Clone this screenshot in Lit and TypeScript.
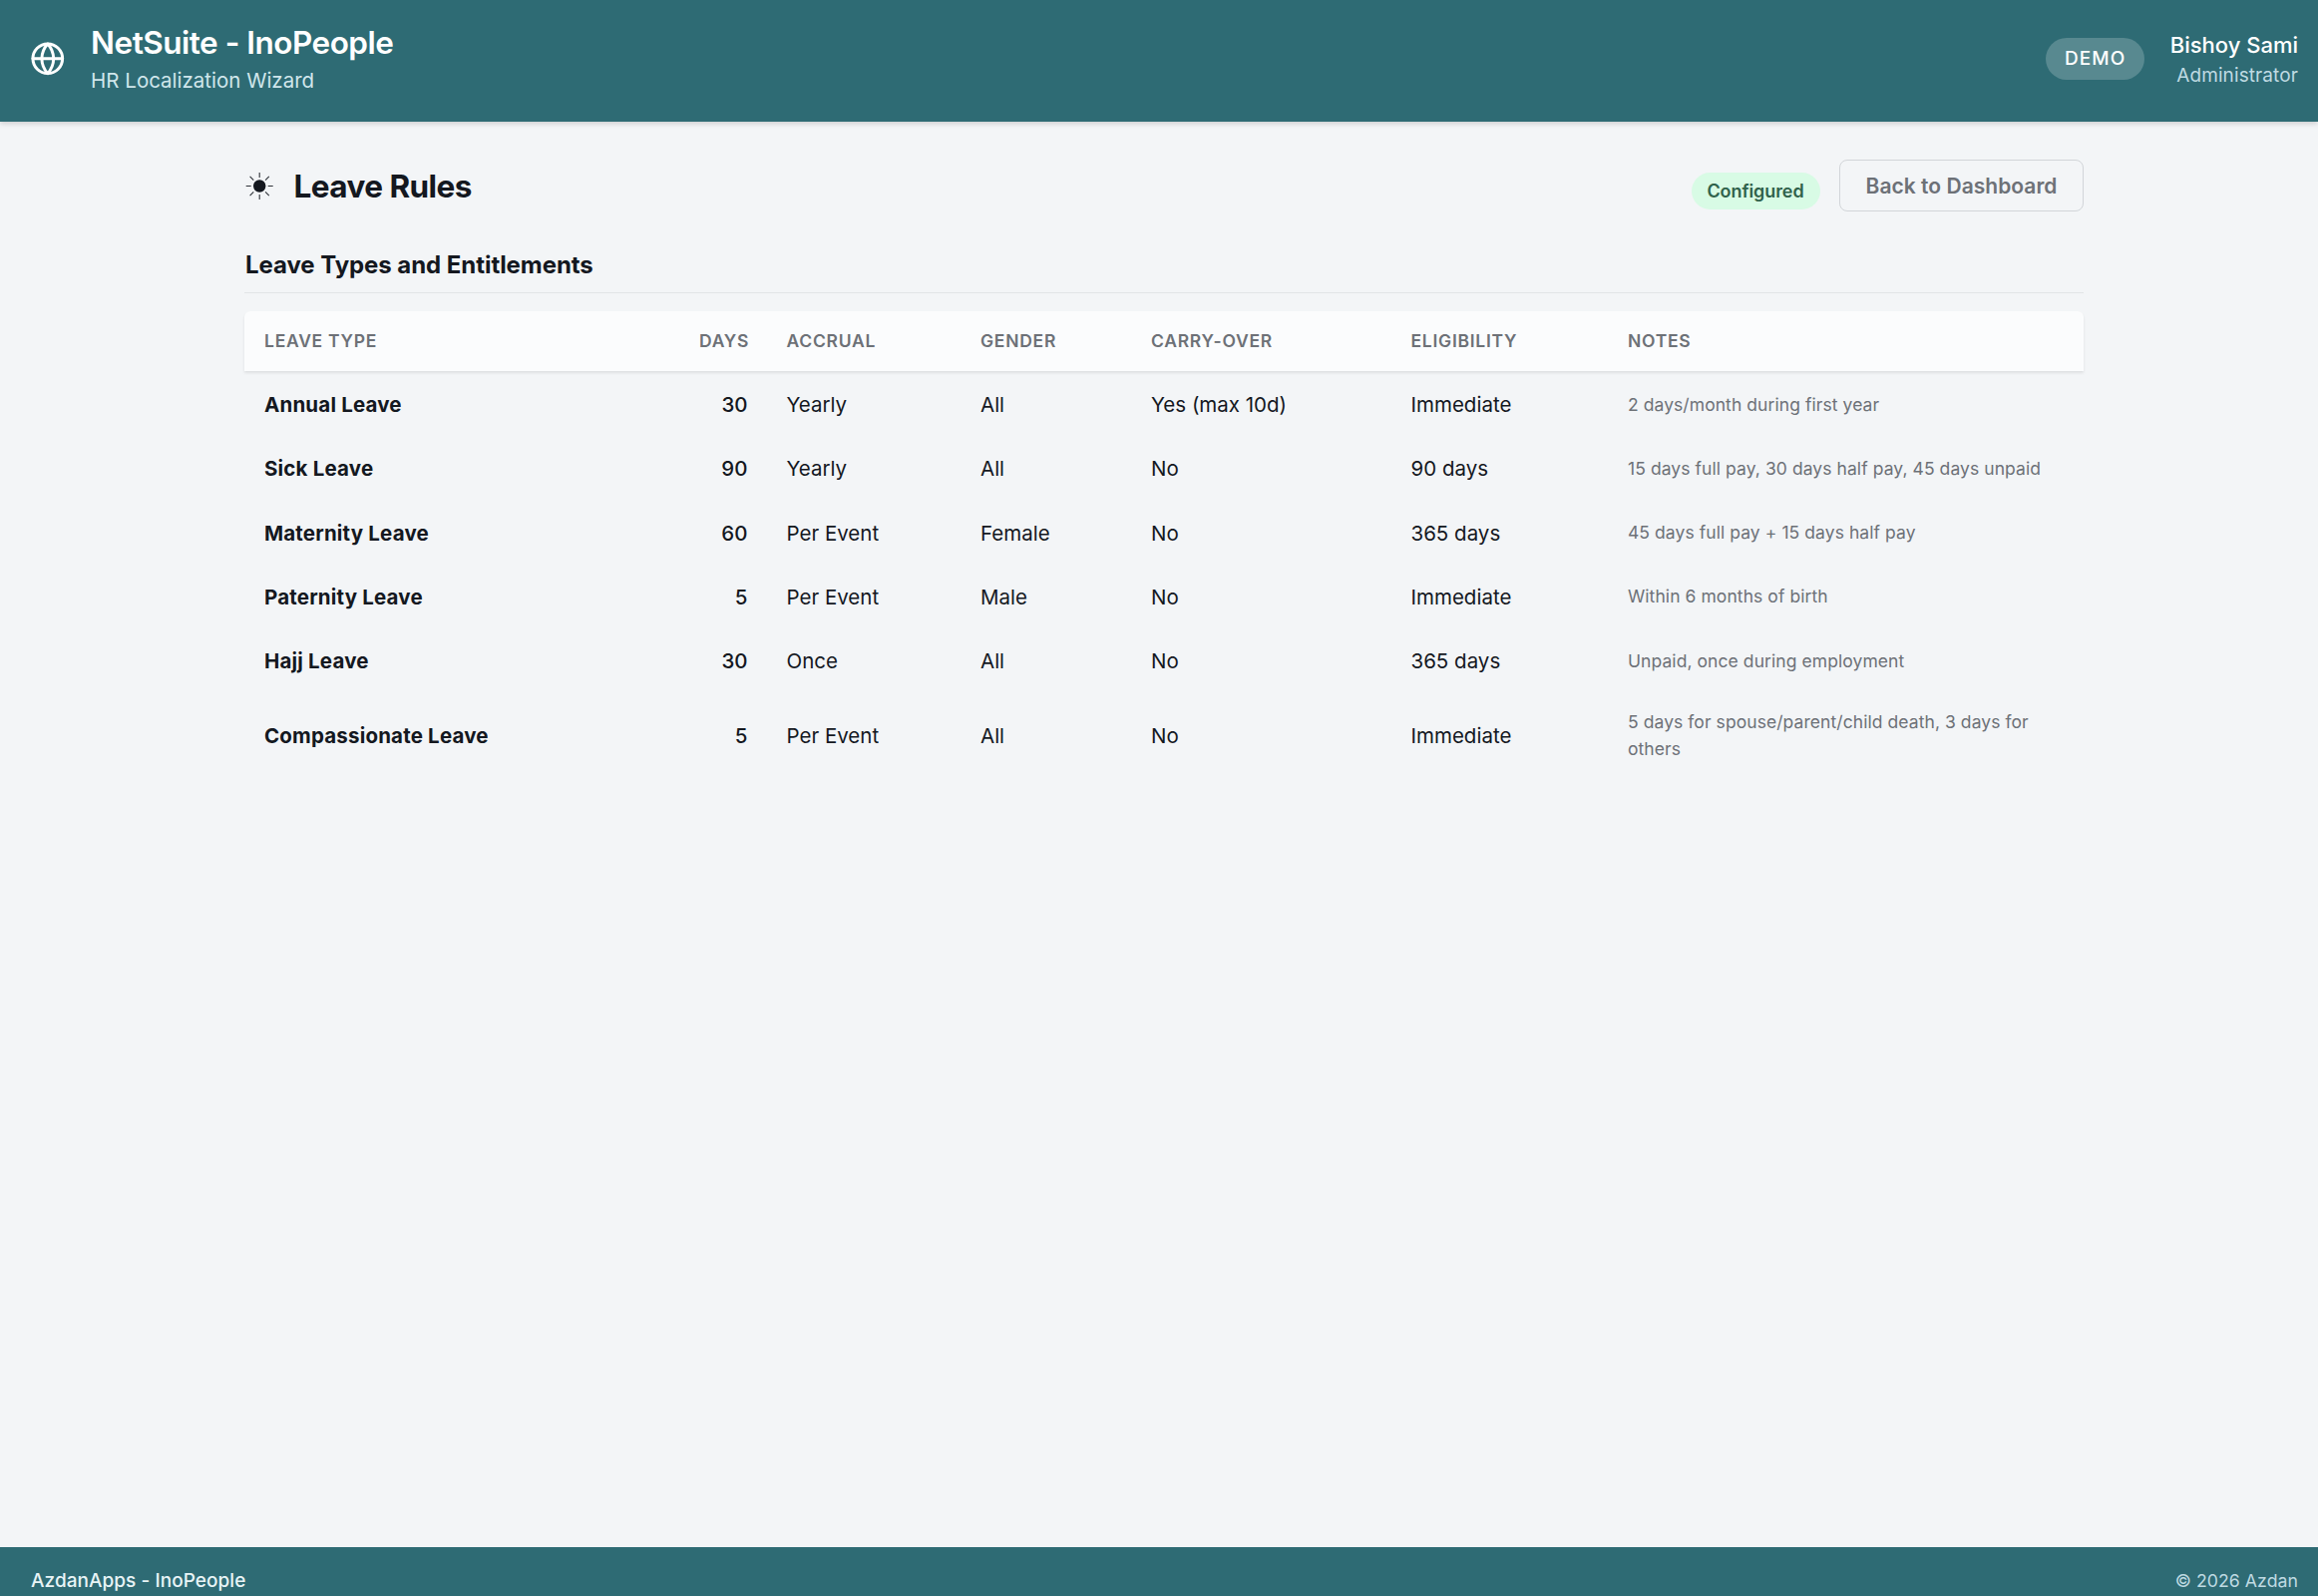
import { LitElement, html, css } from "lit";
import { customElement } from "lit/decorators.js";

interface LeaveRule {
  type: string;
  days: number;
  accrual: string;
  gender: string;
  carryOver: string;
  eligibility: string;
  notes: string;
}

const RULES: LeaveRule[] = [
  { type: "Annual Leave", days: 30, accrual: "Yearly", gender: "All", carryOver: "Yes (max 10d)", eligibility: "Immediate", notes: "2 days/month during first year" },
  { type: "Sick Leave", days: 90, accrual: "Yearly", gender: "All", carryOver: "No", eligibility: "90 days", notes: "15 days full pay, 30 days half pay, 45 days unpaid" },
  { type: "Maternity Leave", days: 60, accrual: "Per Event", gender: "Female", carryOver: "No", eligibility: "365 days", notes: "45 days full pay + 15 days half pay" },
  { type: "Paternity Leave", days: 5, accrual: "Per Event", gender: "Male", carryOver: "No", eligibility: "Immediate", notes: "Within 6 months of birth" },
  { type: "Hajj Leave", days: 30, accrual: "Once", gender: "All", carryOver: "No", eligibility: "365 days", notes: "Unpaid, once during employment" },
  { type: "Compassionate Leave", days: 5, accrual: "Per Event", gender: "All", carryOver: "No", eligibility: "Immediate", notes: "5 days for spouse/parent/child death, 3 days for others" },
];

@customElement("app-header")
class AppHeader extends LitElement {
  static styles = css`
    :host { display: block; }
    .bar {
      box-sizing: border-box;
      display: flex;
      align-items: center;
      justify-content: space-between;
      height: 122px;
      padding: 0 20px 5px 29.5px;
      background: #2e6b74;
      color: #fff;
      box-shadow: 0 2px 5px rgba(0, 0, 0, 0.16);
    }
    .brand, .account { display: flex; align-items: center; gap: 26px; }
    .globe { display: block; width: 35.6px; height: 35.6px; }
    .name { font-size: 31.5px; font-weight: 600; line-height: 44px; letter-spacing: -0.5px; }
    .tagline { font-size: 20.5px; line-height: 32px; color: #d0e6eb; }
    .demo {
      box-sizing: border-box;
      width: 99px;
      height: 42px;
      border-radius: 21px;
      background: #588990;
      font-size: 19px;
      font-weight: 500;
      line-height: 41px;
      letter-spacing: 1.1px;
      text-align: center;
      text-indent: 1px;
    }
    .user { padding-top: 3px; text-align: right; }
    .person { font-size: 22px; font-weight: 500; line-height: 30px; }
    .role { font-size: 19px; line-height: 31px; letter-spacing: 0.1px; color: #bfdae2; }
  `;
  render() {
    return html`
      <header class="bar">
        <div class="brand">
          <svg class="globe" viewBox="0 0 24 24" fill="none" stroke="currentColor" stroke-width="2" stroke-linecap="round" stroke-linejoin="round">
            <circle cx="12" cy="12" r="10"></circle>
            <path d="M2 12h20"></path>
            <path d="M12 2a15.3 15.3 0 0 1 4 10 15.3 15.3 0 0 1-4 10 15.3 15.3 0 0 1-4-10 15.3 15.3 0 0 1 4-10z"></path>
          </svg>
          <div>
            <div class="name">NetSuite - InoPeople</div>
            <div class="tagline">HR Localization Wizard</div>
          </div>
        </div>
        <div class="account">
          <div class="demo">DEMO</div>
          <div class="user">
            <div class="person">Bishoy Sami</div>
            <div class="role">Administrator</div>
          </div>
        </div>
      </header>
    `;
  }
}

@customElement("leave-table")
class LeaveTable extends LitElement {
  static styles = css`
    :host { display: block; }
    .row {
      display: grid;
      grid-template-columns: 436px 87.5px 194.5px 171px 260.5px 217.5px 1fr;
      align-items: center;
      color: #14181f;
      font-size: 20.5px;
      line-height: 32.25px;
    }
    .row > div { padding: 16.5px 19px 15.5px 20px; }
    .head {
      height: 59.5px;
      margin-bottom: 2px;
      border-radius: 6px 6px 0 0;
      background: #fbfcfd;
      box-shadow: 0 2px 3px rgba(0, 0, 0, 0.09);
      color: #6d7177;
      font-size: 17.5px;
      font-weight: 600;
      letter-spacing: 0.74px;
      line-height: 27px;
      text-transform: uppercase;
    }
    .row.head > div { padding-top: 16px; padding-bottom: 16px; }
    .type { font-weight: 700; letter-spacing: 0.18px; }
    .days { text-align: right; }
    .count { font-weight: 500; }
    .row > .notes { padding: 15.5px 18px 16.5px 20px; color: #6d7177; font-size: 17.5px; line-height: 27px; letter-spacing: 0.07px; }
  `;
  render() {
    return html`
      <div class="row head">
        <div>Leave Type</div>
        <div class="days">Days</div>
        <div>Accrual</div>
        <div>Gender</div>
        <div>Carry-Over</div>
        <div>Eligibility</div>
        <div>Notes</div>
      </div>
      ${RULES.map(
        (r) => html`
          <div class="row">
            <div class="type">${r.type}</div>
            <div class="days count">${r.days}</div>
            <div>${r.accrual}</div>
            <div>${r.gender}</div>
            <div>${r.carryOver}</div>
            <div>${r.eligibility}</div>
            <div class="notes">${r.notes}</div>
          </div>
        `
      )}
    `;
  }
}

@customElement("app-root")
class AppRoot extends LitElement {
  static styles = css`
    :host {
      display: flex;
      flex-direction: column;
      height: 1600px;
      overflow: hidden;
      background: #f3f5f7;
      color: #14181f;
      font-family: Inter, sans-serif;
    }
    .main { flex: 1; padding: 38px 235px 0 245px; }
    .top { display: flex; align-items: center; justify-content: space-between; height: 52px; }
    .title { display: flex; align-items: center; gap: 19.5px; }
    .sun { display: block; width: 30px; height: 30px; }
    .page { margin: 0; padding-top: 2px; font-size: 31.5px; font-weight: 700; line-height: 50px; letter-spacing: -0.55px; }
    .actions { display: flex; align-items: center; gap: 19.5px; }
    .status {
      box-sizing: border-box;
      width: 129px;
      height: 37px;
      margin-top: 11px;
      border-radius: 18.5px;
      background: #d8fbe5;
      color: #30624b;
      font-size: 18px;
      font-weight: 600;
      line-height: 38px;
      letter-spacing: -0.08px;
      text-align: center;
    }
    .back {
      box-sizing: border-box;
      width: 245px;
      height: 52px;
      padding: 0;
      border: 1px solid #d2d5d9;
      border-radius: 8px;
      background: transparent;
      color: #6d7177;
      font: 600 21px Inter, sans-serif;
      letter-spacing: 0.03px;
    }
    .section {
      margin: 35px 0 18px;
      padding: 0 0 8px 1px;
      border-bottom: 1px solid #e1e4e7;
      font-size: 24px;
      font-weight: 700;
      line-height: 38px;
      letter-spacing: -0.06px;
    }
    .footer {
      box-sizing: border-box;
      display: flex;
      justify-content: space-between;
      height: 49px;
      padding: 20px 20px 0 31px;
      background: #2e6b74;
      color: #e8f4f6;
      font-size: 19px;
      font-weight: 500;
      line-height: 28px;
      letter-spacing: 0.05px;
    }
    .copy { color: #bfdae2; font-size: 17.7px; font-weight: 400; }
  `;
  render() {
    return html`
      <app-header></app-header>
      <main class="main">
        <div class="top">
          <div class="title">
            <svg class="sun" viewBox="0 0 30 30" stroke="#30343b" stroke-width="1.1">
              <circle cx="15.2" cy="15.5" r="6.2" fill="#14181f" stroke="none"></circle>
              <path d="M15.2 2v5M15.2 24v5M1.7 15.5h5M23.7 15.5h5M5.6 5.9l3.7 3.7M21.1 21.4l3.7 3.7M24.8 5.9l-3.7 3.7M9.3 21.4l-3.7 3.7"></path>
            </svg>
            <h1 class="page">Leave Rules</h1>
          </div>
          <div class="actions">
            <span class="status">Configured</span>
            <button class="back">Back to Dashboard</button>
          </div>
        </div>
        <h2 class="section">Leave Types and Entitlements</h2>
        <leave-table></leave-table>
      </main>
      <footer class="footer">
        <span>AzdanApps - InoPeople</span>
        <span class="copy">© 2026 Azdan</span>
      </footer>
    `;
  }
}
